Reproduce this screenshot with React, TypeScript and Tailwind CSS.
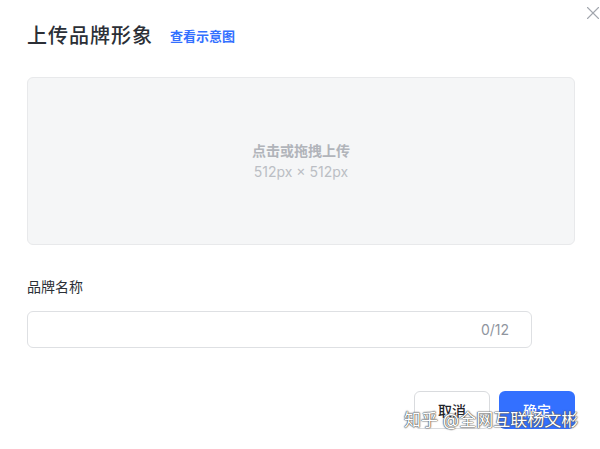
import { X } from 'lucide-react';

export default function App() {
  return (
    <div className="relative w-[600px] h-[449px] overflow-hidden bg-white font-['Inter','Noto_Sans_CJK_SC',sans-serif] text-[#1f2329]">
      {/* Close */}
      <button className="absolute top-[2px] left-[582px] text-[#a2a7ae]">
        <X className="w-[22px] h-[22px]" strokeWidth={1.2} />
      </button>

      {/* Header */}
      <div className="flex items-center pt-[22px] pl-[27px]">
        <h1 className="text-[20px] leading-[28px] font-medium tracking-[1px] text-[#2b2f36]">上传品牌形象</h1>
        <a className="ml-[17px] mt-[2px] text-[13px] font-semibold text-[#3370ff]">查看示意图</a>
      </div>

      {/* Upload area */}
      <div className="ml-[27px] mt-[27px] w-[548px] h-[168px] rounded-[6px] border border-[#e8e9eb] bg-[#f5f6f7] flex flex-col items-center justify-center">
        <div className="text-[14px] leading-[20px] font-semibold text-[#b1b4ba]">点击或拖拽上传</div>
        <div className="text-[14px] leading-[20px] text-[#bbbec4] mt-[1px]">512px × 512px</div>
      </div>

      {/* Name field */}
      <div className="ml-[27px] mt-[31px] text-[14px] leading-[22px] text-[#2b2f36]">品牌名称</div>
      <div className="ml-[27px] mt-[13px] w-[505px] h-[37px] rounded-[6px] border border-[#dee0e3] flex items-center justify-end pr-[22px]">
        <span className="text-[14px] text-[#8f959e]">0/12</span>
      </div>

      {/* Footer */}
      <div className="flex justify-end gap-[9px] mt-[43px] pr-[25px]">
        <button className="w-[76px] h-[38px] rounded-[6px] border border-[#d9dbde] bg-white text-[14px] font-medium text-[#1f2329]">取消</button>
        <button className="w-[76px] h-[38px] rounded-[6px] bg-[#3370ff] text-[14px] font-medium text-white">确定</button>
      </div>

      {/* Watermark */}
      <div className="absolute left-[404px] top-[409px] text-[17px] leading-[22px] text-white [text-shadow:0_0_1px_#444,0_0_1px_#444,0_0_2px_#666] whitespace-nowrap">
        知乎 @全网互联杨文彬
      </div>
    </div>
  );
}
